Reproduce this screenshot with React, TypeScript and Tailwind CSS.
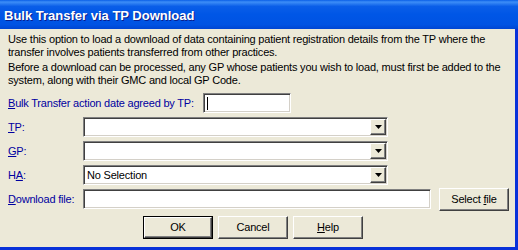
import React from "react";

const sunken =
  "bg-white border border-t-[#808080] border-l-[#808080] border-r-white border-b-white shadow-[inset_1px_1px_#404040,inset_-1px_-1px_#d4d0c8] p-px";
const raised =
  "bg-[#ece9d8] border border-t-white border-l-white border-r-[#404040] border-b-[#404040] shadow-[inset_-1px_-1px_#808080]";

function Arrow() {
  return (
    <div className={`w-[16px] h-[16px] flex items-center justify-center ${raised}`}>
      <svg width="7" height="4" viewBox="0 0 7 4">
        <path d="M0 0H7L3.5 4Z" fill="#000" />
      </svg>
    </div>
  );
}

function Combo({ text }: { text?: string }) {
  return (
    <div className={`w-[305px] h-[20px] flex items-center ${sunken}`}>
      <span className="flex-1 pl-[2px] text-black">{text}</span>
      <Arrow />
    </div>
  );
}

function Label({ pre, u, post, w }: { pre?: string; u: string; post: string; w: string }) {
  return (
    <div className={`${w} text-[#0000a0] shrink-0`}>
      <span>
        {pre}
        <u>{u}</u>
        {post}
      </span>
    </div>
  );
}

function Btn({ children, def }: { children: React.ReactNode; def?: boolean }) {
  if (def) {
    return (
      <div className="w-[70px] h-[23px] border border-black">
        <div className={`w-full h-full flex items-center justify-center text-black ${raised}`}>
          <span>{children}</span>
        </div>
      </div>
    );
  }
  return (
    <div className={`w-[70px] h-[23px] flex items-center justify-center text-black ${raised}`}>
      <span>{children}</span>
    </div>
  );
}

export default function App() {
  return (
    <div className="w-[518px] h-[250px] flex flex-col font-['Liberation_Sans',Arial,sans-serif] text-[11px] leading-[13px] tracking-[-0.2px] whitespace-nowrap overflow-hidden">
      <div className="h-[29px] shrink-0 flex items-center pl-[4px] pt-[2px] bg-[linear-gradient(to_bottom,#0a5fe7_0%,#3d8ef7_7%,#0a5ee8_22%,#0056e6_50%,#0053e3_85%,#0045d2_100%)]">
        <span className="text-white font-bold text-[13px] tracking-normal [text-shadow:1px_1px_#0a1e8c]">
          Bulk Transfer via TP Download
        </span>
      </div>
      <div className="flex-1 bg-[#ece9d8] border-r-[3px] border-b-[3px] border-[#0831d9] pl-[8px] pt-[4px] text-black">
        <div>
          <div>Use this option to load a download of data containing patient registration details from the TP where the</div>
          <div>transfer involves patients transferred from other practices.</div>
        </div>
        <div className="mt-[2px]">
          <div>Before a download can be processed, any GP whose patients you wish to load, must first be added to the</div>
          <div>system, along with their GMC and local GP Code.</div>
        </div>
        <div className="mt-[6px] flex flex-col gap-[4px]">
          <div className="h-[20px] flex items-center">
            <Label u="B" post="ulk Transfer action date agreed by TP:" w="w-[195px]" />
            <div className={`w-[88px] h-[20px] flex items-center ${sunken}`}>
              <div className="ml-[2px] w-px h-[13px] bg-black" />
            </div>
          </div>
          <div className="h-[20px] flex items-center">
            <Label u="T" post="P:" w="w-[75px]" />
            <Combo />
          </div>
          <div className="h-[20px] flex items-center">
            <Label u="G" post="P:" w="w-[75px]" />
            <Combo />
          </div>
          <div className="h-[20px] flex items-center">
            <Label pre="H" u="A" post=":" w="w-[75px]" />
            <Combo text="No Selection" />
          </div>
          <div className="h-[20px] flex items-center">
            <Label u="D" post="ownload file:" w="w-[75px]" />
            <div className={`w-[348px] h-[20px] ${sunken}`} />
            <div className="ml-[8px]">
              <Btn>
                Select <u>f</u>ile
              </Btn>
            </div>
          </div>
        </div>
        <div className="mt-[7px] ml-[135px] flex gap-[5px]">
          <Btn def>OK</Btn>
          <Btn>Cancel</Btn>
          <Btn>
            <u>H</u>elp
          </Btn>
        </div>
      </div>
    </div>
  );
}
